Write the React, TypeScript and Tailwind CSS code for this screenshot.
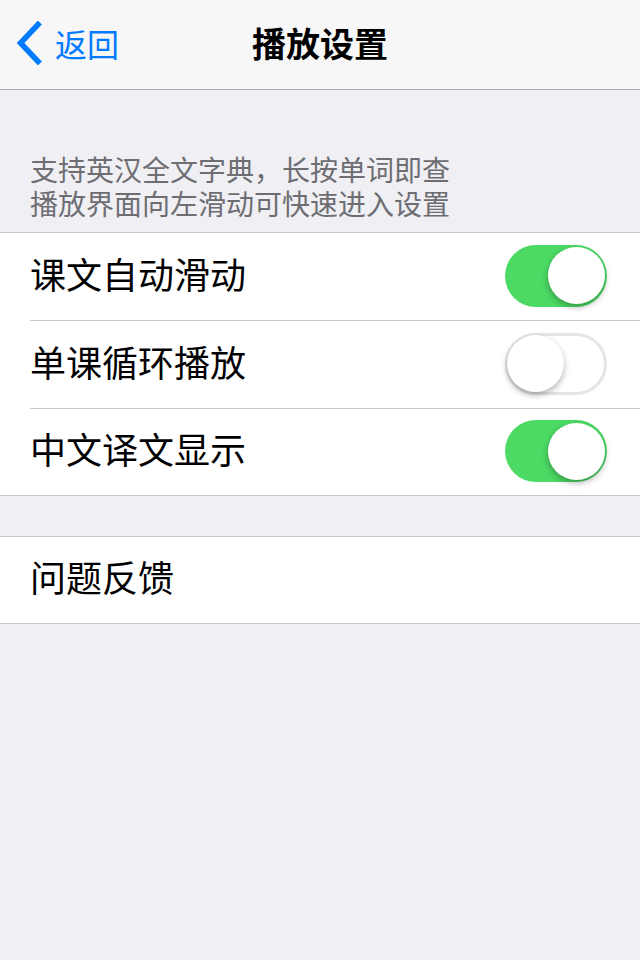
import React from "react";

const font = { fontFamily: '"Noto Sans CJK SC", "Noto Sans", sans-serif' };

function Toggle({ on }: { on: boolean }) {
  return (
    <div
      className={`relative mb-[2px] h-[62px] w-[102px] rounded-full ${
        on ? "bg-[#4cd964]" : "bg-white border-[3px] border-[#e5e5e5]"
      }`}
    >
      <div
        className={`absolute h-[57px] w-[57px] rounded-full bg-white shadow-[0_3px_6px_rgba(0,0,0,0.3)] ${
          on ? "right-[2px] top-[2.5px]" : "left-[-1px] top-[-1px]"
        }`}
      />
    </div>
  );
}

function Row({ label, on, last, h }: { label: string; on?: boolean; last?: boolean; h: string }) {
  return (
    <div className="pl-[30px]">
      <div
        className={`flex ${h} items-center justify-between pr-[33px] ${
          last ? "" : "border-b border-[#c8c7cc]"
        }`}
      >
        <span className="pb-[8px] text-[36px] leading-none text-black">{label}</span>
        {on !== undefined && <Toggle on={on} />}
      </div>
    </div>
  );
}

export default function App() {
  return (
    <div className="min-h-[960px] w-[640px] bg-[#efeff4]" style={font}>
      <div className="relative flex h-[90px] items-center justify-center border-b border-[#b2b2b2] bg-[#f7f7f7]">
        <div className="absolute left-[15px] top-0 flex h-[89px] items-center gap-[12px] pb-[3px] text-[#007aff]">
          <svg width="28" height="44" viewBox="0 0 28 44">
            <path d="M23 3.5 L5.5 22 L23 40.5" fill="none" stroke="#007aff" strokeWidth="5.5" strokeLinecap="square" />
          </svg>
          <span className="text-[32px] leading-none">返回</span>
        </div>
        <span className="pb-[4px] text-[34px] font-semibold leading-none text-black">播放设置</span>
      </div>
      <div className="px-[30px] pb-[12px] pt-[62px] text-[28px] leading-[34px] text-[#6d6d72]">
        <div>支持英汉全文字典，长按单词即查</div>
        <div>播放界面向左滑动可快速进入设置</div>
      </div>
      <div className="border-y border-[#c8c7cc] bg-white">
        <Row label="课文自动滑动" on={true} h="h-[88px]" />
        <Row label="单课循环播放" on={false} h="h-[88px]" />
        <Row label="中文译文显示" on={true} last h="h-[86px]" />
      </div>
      <div className="mt-[40px] border-y border-[#c8c7cc] bg-white">
        <Row label="问题反馈" last h="h-[86px]" />
      </div>
    </div>
  );
}
